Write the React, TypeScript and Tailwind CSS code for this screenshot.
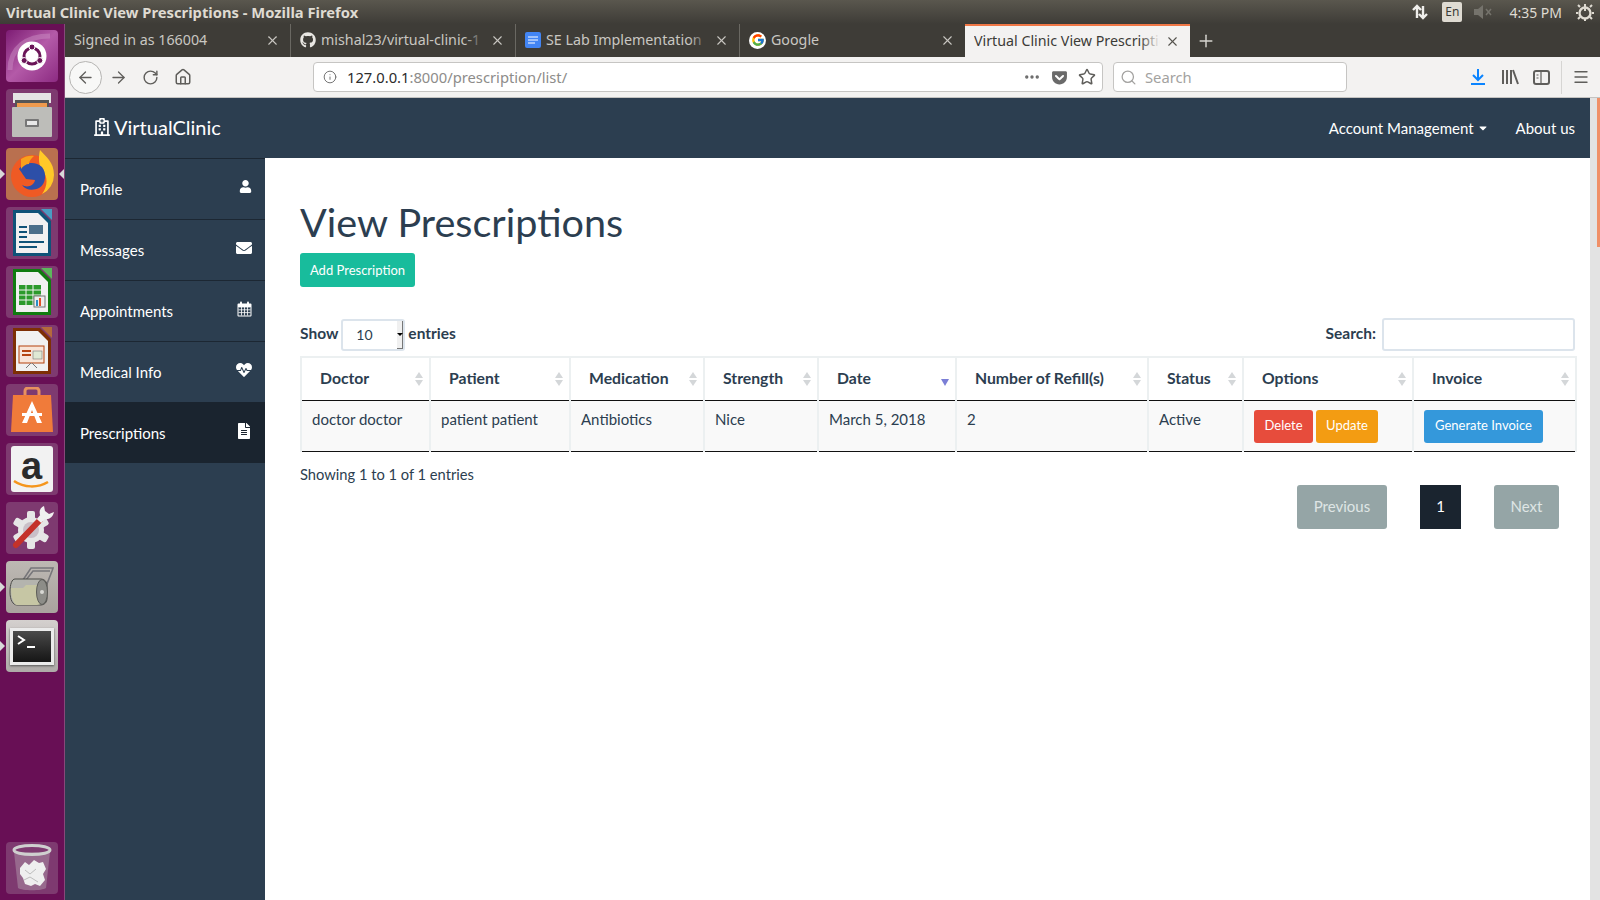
import React from 'react';
import { ArrowLeft, ArrowRight, RotateCw, Home, Info, Star, Search, Menu, X, Plus, Ellipsis } from 'lucide-react';
import { FaUser, FaEnvelope, FaHeartbeat, FaFileAlt, FaRegHospital, FaGithub, FaGetPocket, FaCaretDown } from 'react-icons/fa';
import { FcGoogle } from 'react-icons/fc';

const Tile: React.FC<{ className?: string; children?: React.ReactNode }> = ({ className = '', children }) => (
  <div className={`w-[52px] h-[52px] rounded-[4px] flex items-center justify-center overflow-hidden relative ${className}`}>
    {children}
  </div>
);

const Pip: React.FC<{ side: 'left' | 'right' }> = ({ side }) => (
  <div
    className={`absolute top-1/2 -translate-y-1/2 w-0 h-0 border-y-[5px] border-y-transparent ${
      side === 'left' ? 'left-[-6px] border-l-[5px] border-l-[#d8d8d8]' : 'right-[-6px] border-r-[5px] border-r-[#d8d8d8]'
    }`}
  />
);

const DocIcon: React.FC<{ edge: string; corner: string; children: React.ReactNode }> = ({ edge, corner, children }) => (
  <svg width="42" height="50" viewBox="0 0 42 50">
    <path d="M2 2h27l11 11v35H2z" fill={edge} />
    <path d="M30 1h11v11z" fill={corner} />
    <path d="M5 5h22l10 10v30H5z" fill="#f1f1f1" />
    {children}
  </svg>
);

const Launcher = () => (
  <div className="w-[65px] shrink-0 bg-[#680f55] border-r border-[#87487a] flex flex-col items-center pt-[6px] gap-[7px] pb-[6px] pr-[1px]">
    <Tile className="bg-gradient-to-br from-[#7d1a74] via-[#b45aa8] to-[#8c2a82]">
      <svg width="52" height="52" viewBox="0 0 52 52">
        <path d="M4 40C4 18 20 6 44 6" fill="none" stroke="#c98cc2" strokeOpacity="0.5" strokeWidth="5" />
        <circle cx="26" cy="26" r="14.5" fill="#fff" />
        <circle cx="26" cy="26" r="8" fill="none" stroke="#6a1558" strokeWidth="3" />
        <circle cx="26" cy="17" r="3" fill="#6a1558" stroke="#fff" />
        <circle cx="18.2" cy="30.5" r="3" fill="#6a1558" stroke="#fff" />
        <circle cx="33.8" cy="30.5" r="3" fill="#6a1558" stroke="#fff" />
      </svg>
    </Tile>
    <Tile className="bg-[#7e3a70]">
      <svg width="42" height="46" viewBox="0 0 42 46">
        <rect x="2" y="1" width="38" height="10" fill="#e4e4e4" />
        <rect x="4" y="8" width="34" height="12" fill="#555" />
        <rect x="6" y="11" width="30" height="5" fill="#ee9a4d" />
        <rect x="1" y="15" width="40" height="30" rx="1" fill="#bdbdb9" />
        <rect x="14" y="27" width="14" height="8" rx="1" fill="#777" />
        <rect x="16" y="29" width="10" height="4" fill="#e8e8e8" />
      </svg>
    </Tile>
    <div className="relative">
      <Pip side="left" />
      <Pip side="right" />
      <Tile className="bg-[#b9704f]">
        <svg width="46" height="50" viewBox="0 0 46 50">
          <circle cx="23" cy="27" r="21" fill="#ef5a24" />
          <path d="M31 1c6 7 14 12 14 25a21 21 0 0 1-12 19c6-8 6-18 0-24-3-4-4-12-2-20z" fill="#ffc928" />
          <path d="M10 20c4-6 16-9 23-2 5 6 4 17-3 21-6 3-14 2-17-3 5 3 12 1 13-5l-9-1c-2-3-4-6-7-10z" fill="#2d4fa8" />
          <path d="M12 10c4-3 10-4 13-3-3 3-5 5-5 8-3 0-6 2-8 5z" fill="#f9a01b" />
        </svg>
      </Tile>
    </div>
    <Tile className="bg-[#7e3a70]">
      <DocIcon edge="#0f5378" corner="#4a9cc2">
        <rect x="8" y="18" width="8" height="2" fill="#0f5378" />
        <rect x="8" y="23" width="8" height="2" fill="#0f5378" />
        <rect x="8" y="28" width="8" height="2" fill="#0f5378" />
        <rect x="18" y="17" width="14" height="9" fill="#4a6f8a" />
        <rect x="8" y="33" width="25" height="2" fill="#0f5378" />
        <rect x="8" y="38" width="18" height="2" fill="#0f5378" />
      </DocIcon>
    </Tile>
    <Tile className="bg-[#7e3a70]">
      <DocIcon edge="#107c10" corner="#5cb85c">
        <rect x="8" y="18" width="22" height="20" fill="#2c9a2c" />
        <path d="M8 23h22M8 28h22M8 33h22M15 18v20M22 18v20" stroke="#f1f1f1" />
        <rect x="23" y="29" width="11" height="11" fill="#eee" stroke="#777" />
        <rect x="25" y="33" width="2" height="6" fill="#2a8dc5" />
        <rect x="28" y="31" width="2" height="8" fill="#e0522a" />
      </DocIcon>
    </Tile>
    <Tile className="bg-[#7e3a70]">
      <DocIcon edge="#7e2f05" corner="#b46a3c">
        <rect x="8" y="20" width="25" height="17" fill="#f9e5d8" stroke="#b5430f" />
        <rect x="11" y="24" width="9" height="2" fill="#b5430f" />
        <rect x="11" y="28" width="9" height="2" fill="#b5430f" />
        <rect x="22" y="25" width="9" height="8" fill="#dfe9d4" stroke="#666" strokeWidth="0.5" />
        <path d="M20 37l-5 5M21 37l5 5" stroke="#777" />
      </DocIcon>
    </Tile>
    <Tile className="bg-[#7e3a70]">
      <svg width="44" height="46" viewBox="0 0 44 46">
        <path d="M15 8V4a3 3 0 0 1 3-3h8a3 3 0 0 1 3 3v4" fill="none" stroke="#e8915f" strokeWidth="3" />
        <path d="M3 8h38l2 37H1z" fill="#f07b3a" />
        <path d="M22 14l10 22h-5l-5-13-5 13h-5z" fill="#fff" />
        <rect x="12" y="26" width="20" height="3" fill="#fff" />
      </svg>
    </Tile>
    <Tile className="bg-[#7e3a70]">
      <div className="w-[42px] h-[46px] bg-[#f2f2f2] rounded-[3px] flex justify-center relative">
        <span className="text-[38px] leading-[40px] font-bold text-[#2b2b2b] font-['Liberation_Sans',sans-serif]">a</span>
        <svg className="absolute bottom-[3px]" width="38" height="10" viewBox="0 0 38 10">
          <path d="M1 2c10 7 24 7 34 1" fill="none" stroke="#f5961d" strokeWidth="2.5" />
        </svg>
      </div>
    </Tile>
    <Tile className="bg-[#7e3a70]">
      <svg width="46" height="46" viewBox="0 0 46 46">
        <g fill="#e6e6e6">
          <rect x="18" y="6" width="8" height="38" rx="2" />
          <rect x="18" y="6" width="8" height="38" rx="2" transform="rotate(60 22 25)" />
          <rect x="18" y="6" width="8" height="38" rx="2" transform="rotate(120 22 25)" />
        </g>
        <circle cx="22" cy="25" r="13" fill="#e6e6e6" />
        <circle cx="22" cy="25" r="8" fill="#c9bfc7" />
        <path d="M7 40L31 15" stroke="#c4322a" strokeWidth="6" strokeLinecap="round" />
        <path d="M30 16l7-8" stroke="#f0f0f0" strokeWidth="6" />
        <path d="M35 1c-4 2-5 5-4 9l5 4c4 1 8-2 9-7l-5 2-4-3z" fill="#f0f0f0" />
      </svg>
    </Tile>
    <div className="relative">
      <Pip side="left" />
      <Tile className="bg-gradient-to-b from-[#bdb8b3] to-[#a9a39e]">
        <svg width="48" height="42" viewBox="0 0 48 42">
          <path d="M15 14L23 2h22l-1 3-7 18M18 14L25 5h17" fill="none" stroke="#77767a" strokeWidth="1.6" />
          <path d="M7 13h26a6 6 0 0 1 6 6v14a6 6 0 0 1-6 6H9c-4 0-7-5-7-13s2-13 5-13z" fill="#b4b4ae" stroke="#4b4b47" />
          <path d="M3 22h12l3-3h17v14a6 6 0 0 1-6 6H9c-3 0-6-7-6-17z" fill="#c6c6a4" />
          <ellipse cx="34" cy="26" rx="5.5" ry="12.5" fill="#8d8d88" stroke="#5c5c58" />
          <circle cx="34" cy="26" r="2" fill="#d8d8d4" />
        </svg>
      </Tile>
    </div>
    <div className="relative">
      <Pip side="left" />
      <Tile className="bg-gradient-to-b from-[#d4d0ce] to-[#aeaaa8]">
        <div className="w-[44px] h-[37px] bg-[#ebebeb] p-[3px] shadow-[0_1px_2px_#555]">
          <div className="w-full h-full bg-gradient-to-b from-[#4a4a4a] to-[#161616] relative">
            <svg width="20" height="16" viewBox="0 0 20 16" className="absolute left-[3px] top-[3px]">
              <path d="M2 2l6 4-6 4" fill="none" stroke="#fff" strokeWidth="2" />
              <path d="M11 13h8" stroke="#fff" strokeWidth="2" />
            </svg>
          </div>
        </div>
      </Tile>
    </div>
    <div className="mt-auto">
      <Tile className="bg-[#7e3a70]">
        <svg width="42" height="48" viewBox="0 0 42 48">
          <path d="M3 8l4 36c4 3 24 3 28 0l4-36" fill="#a27e9a" fillOpacity="0.7" />
          <ellipse cx="21" cy="6" rx="18" ry="4.5" fill="none" stroke="#cfcfcf" strokeWidth="3" />
          <path d="M9 24l5-6 4 3 5-5 5 3 4-1 3 7-3 5 2 6-5 6-5-2-4 2-6-2-2-6-3-4z" fill="#efefef" />
          <path d="M14 26l5 4 6-5M13 36l6-3 8 5" fill="none" stroke="#bdbdbd" />
        </svg>
      </Tile>
    </div>
  </div>
);

const Tab: React.FC<{ w: string; active?: boolean; sep?: boolean; icon?: React.ReactNode; title: string; fade?: boolean }> = ({ w, active, sep, icon, title, fade }) => (
  <div
    className={`relative h-[33px] shrink-0 flex items-center pl-[9px] pr-[10px] pb-[1px] gap-[5px] ${w} ${
      active ? 'bg-[#f3f2f1] text-[#3c3b37] border-t-2 border-[#f07746]' : 'text-[#c9c7c2]'
    } ${sep ? 'border-r border-[#6a6862]' : ''}`}
  >
    {icon}
    <div className="relative flex-1 overflow-hidden whitespace-nowrap text-[14.25px] leading-[20px]">
      {title}
      {fade && (
        <div className={`absolute right-0 top-0 h-full w-[20px] bg-gradient-to-r from-transparent ${active ? 'to-[#f3f2f1]' : 'to-[#3e3c37]'}`} />
      )}
    </div>
    <X size={15} strokeWidth={1.75} className={active ? 'text-[#55534e] shrink-0' : 'text-[#c9c7c2] shrink-0'} />
  </div>
);

const Toolbar = () => (
  <div className="h-[41px] shrink-0 bg-[#f3f2f1] border-b border-[#c4c3c1] flex items-center text-[#5f5e5b]">
    <div className="w-[33px] h-[33px] ml-[4px] rounded-full border border-[#b5b4b2] bg-[#f8f8f7] flex items-center justify-center">
      <ArrowLeft size={19} strokeWidth={1.6} />
    </div>
    <ArrowRight size={19} strokeWidth={1.6} className="ml-[7px]" />
    <RotateCw size={17} strokeWidth={2} className="ml-[14px]" />
    <Home size={18} strokeWidth={2} className="ml-[15px]" />
    <div className="ml-[121px] w-[790px] h-[30px] bg-white border border-[#c6c5c3] rounded-[4px] flex items-center pl-[9px] pr-[6px]">
      <Info size={14} strokeWidth={1.6} className="text-[#6a6a6a]" />
      <div className="ml-[10px] text-[14.75px] font-['Noto_Sans',sans-serif] flex-1">
        <span className="text-[#2b2b2b]">127.0.0.1</span>
        <span className="text-[#8d8c8a]">:8000/prescription/list/</span>
      </div>
      <Ellipsis size={18} strokeWidth={2.5} className="text-[#6a6a6a]" />
      <FaGetPocket size={17} className="ml-[10px] text-[#6a6a6a]" />
      <Star size={18} strokeWidth={2} className="ml-[10px] text-[#5f5e5b]" />
    </div>
    <div className="ml-[10px] w-[234px] h-[30px] bg-white border border-[#c6c5c3] rounded-[4px] flex items-center pl-[6px] text-[#a3a2a0]">
      <Search size={17} strokeWidth={1.8} />
      <span className="ml-[8px] text-[14.75px] font-['Noto_Sans',sans-serif]">Search</span>
    </div>
    <svg width="16" height="18" viewBox="0 0 16 18" className="ml-[123px]" fill="none" stroke="#0a84ff" strokeWidth="2">
      <path d="M8 1v11M3 7l5 5 5-5M1 16h14" />
    </svg>
    <svg width="18" height="16" viewBox="0 0 18 16" className="ml-[15px]" fill="none" stroke="#5f5e5b" strokeWidth="2">
      <path d="M2 1v14M6 1v14M10 1v14M12 1l5 14" />
    </svg>
    <svg width="17" height="15" viewBox="0 0 17 15" className="ml-[14px]" fill="none" stroke="#5f5e5b" strokeWidth="2">
      <rect x="1" y="1" width="15" height="13" rx="2" />
      <path d="M8 2v11M3.5 5h2M3.5 8h2" strokeWidth="1.2" />
    </svg>
    <div className="ml-[11px] w-px h-[33px] bg-[#d6d5d3]" />
    <Menu size={18} strokeWidth={1.8} className="ml-[10px]" />
  </div>
);

const CalendarGlyph = () => (
  <svg width="15" height="16" viewBox="0 0 15 16" fill="currentColor">
    <path d="M1.5 2.5h12a1 1 0 0 1 1 1v11a1 1 0 0 1-1 1h-12a1 1 0 0 1-1-1v-11a1 1 0 0 1 1-1z" />
    <rect x="3" y="0.5" width="2" height="4" rx="1" />
    <rect x="10" y="0.5" width="2" height="4" rx="1" />
    <path d="M1.5 6h12v8.5h-12z" fill="#2c3e50" />
    <path d="M1.5 6h12M1.5 8.8h12M1.5 11.6h12M4.5 6v8.5M7.5 6v8.5M10.5 6v8.5" stroke="#fff" strokeWidth="0.8" fill="none" />
  </svg>
);

const Sidebar = () => {
  const items = [
    { label: 'Profile', icon: <FaUser size={13} /> },
    { label: 'Messages', icon: <FaEnvelope size={16} /> },
    { label: 'Appointments', icon: <CalendarGlyph /> },
    { label: 'Medical Info', icon: <FaHeartbeat size={16} /> },
    { label: 'Prescriptions', icon: <FaFileAlt size={16} />, active: true },
  ];
  return (
    <div className="w-[200px] shrink-0 bg-[#2c3e50] text-white">
      {items.map((item) => (
        <div
          key={item.label}
          className={`h-[61px] pl-[15px] pr-[13px] flex justify-between items-center text-[15px] border-t ${
            item.active ? 'bg-[#1a242f] border-[#1a242f]' : 'border-[#1c2733]'
          }`}
        >
          <span>{item.label}</span>
          <span className="-mt-[5px]">{item.icon}</span>
        </div>
      ))}
    </div>
  );
};

const SortIcon: React.FC<{ active?: boolean }> = ({ active }) =>
  active ? (
    <div className="absolute right-[6px] bottom-[14px] w-0 h-0 border-x-[4px] border-x-transparent border-t-[7px] border-t-[#7b7fd6]" />
  ) : (
    <div className="absolute right-[6px] top-1/2 -translate-y-1/2 flex flex-col gap-[2px]">
      <div className="w-0 h-0 border-x-[4px] border-x-transparent border-b-[6px] border-b-[#d4d7d9]" />
      <div className="w-0 h-0 border-x-[4px] border-x-transparent border-t-[6px] border-t-[#d4d7d9]" />
    </div>
  );

const columns = [
  { label: 'Doctor', w: 'w-[129px]' },
  { label: 'Patient', w: 'w-[140px]' },
  { label: 'Medication', w: 'w-[134px]' },
  { label: 'Strength', w: 'w-[114px]' },
  { label: 'Date', w: 'w-[138px]', active: true },
  { label: 'Number of Refill(s)', w: 'w-[192px]' },
  { label: 'Status', w: 'w-[95px]' },
  { label: 'Options', w: 'w-[170px]' },
  { label: 'Invoice', w: 'w-[163px]' },
];

const cellClass = 'border-x-2 border-[#ecf0f1] px-[10px] pt-[7px] align-top h-[51px]';

const PrescriptionTable = () => (
  <table className="w-[1275px] table-fixed border-collapse mt-[5px] text-[15px] text-[#2c3e50]">
    <thead>
      <tr className="h-[43px] border-t-2 border-[#ecf0f1]">
        {columns.map((col) => (
          <th key={col.label} className={`relative ${col.w} border-x-2 border-[#ecf0f1] border-b border-b-[#111] pl-[18px] pb-[2px] text-left text-[15.75px] font-bold`}>
            {col.label}
            <SortIcon active={col.active} />
          </th>
        ))}
      </tr>
    </thead>
    <tbody>
      <tr className="bg-[#f9f9f9] border-b border-[#111]">
        <td className={cellClass}>doctor doctor</td>
        <td className={cellClass}>patient patient</td>
        <td className={cellClass}>Antibiotics</td>
        <td className={cellClass}>Nice</td>
        <td className={cellClass}>March 5, 2018</td>
        <td className={cellClass}>2</td>
        <td className={cellClass}>Active</td>
        <td className={`${cellClass} !pt-[9px]`}>
          <div className="flex gap-[3px]">
            <button className="h-[33px] w-[59px] rounded-[3px] bg-[#e74c3c] text-white text-[13px]">Delete</button>
            <button className="h-[33px] w-[62px] rounded-[3px] bg-[#f39c12] text-white text-[13px]">Update</button>
          </div>
        </td>
        <td className={`${cellClass} !pt-[9px]`}>
          <button className="h-[33px] w-[119px] rounded-[3px] bg-[#3498db] text-white text-[13px]">Generate Invoice</button>
        </td>
      </tr>
    </tbody>
  </table>
);

const App = () => (
  <div className="w-[1600px] h-[900px] overflow-hidden flex flex-col bg-white font-['Lato',sans-serif]">
    <div className="h-[24px] shrink-0 bg-gradient-to-b from-[#5a574e] to-[#3e3c37] px-[6px] flex items-center justify-between text-[#dfdbd2] text-[14.75px] font-bold font-['Noto_Sans',sans-serif]">
      <span>Virtual Clinic View Prescriptions - Mozilla Firefox</span>
      <div className="flex items-center font-normal">
        <svg width="18" height="18" viewBox="0 0 18 18" fill="none" stroke="#f0efec" strokeWidth="2.4">
          <path d="M6 15V3M2 7l4-4 4 4M12 3v12M8 11l4 4 4-4" />
        </svg>
        <span className="ml-[13px] w-[20px] h-[20px] bg-[#dfdbd2] rounded-[2px] text-[#3c3b37] text-[12px] flex items-center justify-center">En</span>
        <svg width="18" height="14" viewBox="0 0 18 14" className="ml-[12px]">
          <path d="M0 4h4l5-4v14l-5-4H0z" fill="#75736c" />
          <path d="M12 4l5 6M17 4l-5 6" stroke="#75736c" strokeWidth="1.5" />
        </svg>
        <span className="ml-[17px] text-[14px] text-[#dfdbd2]">4:35 PM</span>
        <svg width="18" height="18" viewBox="0 0 18 18" className="ml-[14px]" fill="none" stroke="#dfdbd2" strokeWidth="2.4">
          <circle cx="9" cy="10" r="5.5" />
          <path d="M9 1v7M9 15v3M2 10H0M18 10h-2M4 4l-2-2M16 16l-2-2M14 4l2-2M2 16l2-2" strokeWidth="2" />
        </svg>
      </div>
    </div>
    <div className="flex-1 flex min-h-0">
      <Launcher />
      <div className="flex-1 min-w-0 flex flex-col">
        <div className="h-[33px] shrink-0 bg-[#3e3c37] flex items-center font-['Noto_Sans',sans-serif]">
          <Tab w="w-[226px]" sep title="Signed in as 166004" />
          <Tab w="w-[225px]" sep title="mishal23/virtual-clinic-1" fade icon={<FaGithub size={16} className="shrink-0 text-[#e8e6e2]" />} />
          <Tab
            w="w-[224px]"
            sep
            title="SE Lab Implementation"
            fade
            icon={
              <svg width="16" height="16" viewBox="0 0 16 16" className="shrink-0">
                <rect x="0" y="0" width="16" height="16" rx="2" fill="#4285f4" />
                <path d="M3 5h10M3 8h10M3 11h7" stroke="#fff" />
              </svg>
            }
          />
          <Tab w="w-[225px]" title="Google" icon={<span className="shrink-0 w-[17px] h-[17px] rounded-full bg-white flex items-center justify-center"><FcGoogle size={14} /></span>} />
          <Tab w="w-[225px]" active title="Virtual Clinic View Prescriptions" fade />
          <Plus size={20} strokeWidth={1.75} className="ml-[6px] text-[#d6d4cf]" />
        </div>
        <Toolbar />
        <div className="flex-1 min-h-0 flex">
          <div className="flex-1 min-w-0 flex flex-col">
            <div className="h-[60px] shrink-0 bg-[#2c3e50] text-white flex items-center">
              <div className="ml-[28px] pb-[2px] flex items-center text-[20px]">
                <FaRegHospital size={18} />
                <span className="ml-[3px]">VirtualClinic</span>
              </div>
              <div className="ml-auto mr-[15px] flex items-center text-[15px]">
                <span>Account Management</span>
                <FaCaretDown size={12} className="ml-[3px]" />
                <span className="ml-[27px]">About us</span>
              </div>
            </div>
            <div className="flex-1 min-h-0 flex">
              <Sidebar />
              <div className="flex-1 min-w-0 pl-[35px]">
                <h1 className="mt-[39px] text-[39.6px] leading-[49px] text-[#2c3e50] font-normal">View Prescriptions</h1>
                <button className="mt-[7px] block h-[34px] w-[115px] pt-[1px] rounded-[3px] bg-[#18bc9c] text-white text-[13px]">Add Prescription</button>
                <div className="mt-[31px] w-[1275px] flex items-center justify-between text-[15.5px] text-[#2c3e50] font-bold">
                  <div className="flex items-center">
                    <span className="-mt-[1px]">Show</span>
                    <div className="relative ml-[3px] mr-[3px] w-[64px] h-[32px] rounded-[3px] border-2 border-[#dce4ec] flex items-center pl-[13px] font-normal text-[14px]">
                      10
                      <div className="absolute right-0 top-0 bottom-0 w-[6px] bg-[#f0f0f0] border-r border-b border-[#777] flex items-center justify-center">
                        <div className="w-0 h-0 border-x-[3px] border-x-transparent border-t-[3px] border-t-black" />
                      </div>
                    </div>
                    <span className="-mt-[1px]">entries</span>
                  </div>
                  <div className="flex items-center">
                    <span className="-mt-[1px]">Search:</span>
                    <div className="ml-[6px] w-[193px] h-[33px] rounded-[3px] border-2 border-[#dce4ec]" />
                  </div>
                </div>
                <PrescriptionTable />
                <div className="mt-[11px] text-[14.7px] text-[#2c3e50]">Showing 1 to 1 of 1 entries</div>
                <div className="w-[1259px] flex justify-end text-[15px]">
                  <div className="w-[90px] h-[44px] rounded-[3px] bg-[#95a5a6] text-[#dfe5e5] flex items-center justify-center">Previous</div>
                  <div className="ml-[33px] w-[41px] h-[44px] bg-[#1a242f] text-white flex items-center justify-center">1</div>
                  <div className="ml-[33px] w-[65px] h-[44px] rounded-[3px] bg-[#95a5a6] text-[#dfe5e5] flex items-center justify-center">Next</div>
                </div>
              </div>
            </div>
          </div>
          <div className="w-[10px] shrink-0 bg-[#e3e3e3] flex justify-end">
            <div className="w-[3px] h-[149px] bg-[#f09068]" />
          </div>
        </div>
      </div>
    </div>
  </div>
);

export default App;
